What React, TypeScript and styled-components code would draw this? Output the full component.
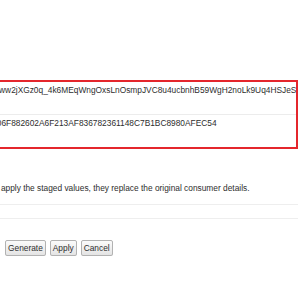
import React from 'react';
import styled, { createGlobalStyle } from 'styled-components';

const GlobalStyle = createGlobalStyle`
    html, body {
        margin: 0;
        padding: 0;
        background: #ffffff;
        overflow: hidden;
    }
    body {
        font-family: "Liberation Sans", Arial, sans-serif;
        font-size: 8.35px;
        color: #2e2e2e;
    }
`;

// the page is scrolled a little to the right, so the left edge is cut off
const Page = styled.div`
    margin-left: -40px;
    width: 338px;
    padding-top: 80px;
`;

const StagedPanel = styled.div`
    border: 2px solid #e4262c;
    display: flex;
    flex-direction: column;
`;

const ValueRow = styled.div<{ $height: number }>`
    height: ${(p) => p.$height}px;
    padding-top: 3px;
    line-height: 10px;
    white-space: nowrap;
    overflow: hidden;
    box-sizing: border-box;

    & + & {
        border-top: 1px solid #ececec;
    }
`;

const Note = styled.p`
    margin: 34px 0 0;
    padding-left: 1px;
    line-height: 10px;
    white-space: nowrap;
`;

const Divider = styled.div`
    margin-top: 11px;
    height: 13px;
    border-top: 1px solid #eeeeee;
    border-bottom: 1px solid #eeeeee;
`;

const ButtonBar = styled.div`
    display: flex;
    gap: 4px;
    margin-top: 21px;
    padding-left: 45px;
`;

const Button = styled.button`
    height: 16px;
    padding: 0 2px;
    font-family: "Liberation Sans", Arial, sans-serif;
    font-size: 8.35px;
    color: #2e2e2e;
    background: linear-gradient(#fbfbfb, #e4e4e4);
    border: 1px solid #b2b2b2;
    border-radius: 2px;
    box-shadow: 0 1px 0 rgba(0, 0, 0, 0.08);
    cursor: pointer;
`;

const App = () => (
    <>
        <GlobalStyle />
        <Page>
            <StagedPanel>
                <ValueRow $height={32}>
                    Y8bTq1Frww2jXGz0q_4k6MEqWngOxsLnOsmpJVC8u4ucbnhB59WgH2noLk9Uq4HSJeS
                </ValueRow>
                <ValueRow $height={33}>9A3571D06F882602A6F213AF836782361148C7B1BC8980AFEC54</ValueRow>
            </StagedPanel>
            <Note>When you apply the staged values, they replace the original consumer details.</Note>
            <Divider />
            <ButtonBar>
                <Button>Generate</Button>
                <Button>Apply</Button>
                <Button>Cancel</Button>
            </ButtonBar>
        </Page>
    </>
);

export default App;
